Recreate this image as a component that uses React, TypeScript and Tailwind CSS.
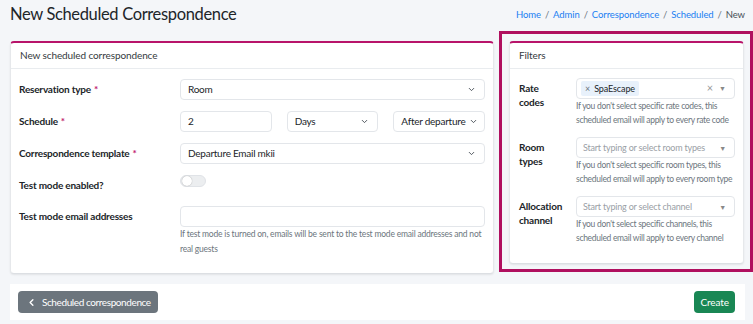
import { ChevronDown, ChevronLeft } from 'lucide-react';

function SelectBox({ value, className = '' }: { value: string; className?: string }) {
  return (
    <div
      className={`flex h-[21px] items-center justify-between rounded-[4px] border border-[#e3e6ea] bg-white pl-[7px] pr-[8px] text-[10px] tracking-[-0.25px] text-[#212529] ${className}`}
    >
      <span className="whitespace-nowrap">{value}</span>
      <ChevronDown size={9} strokeWidth={2.5} className="ml-[4px] shrink-0 text-[#495057]" />
    </div>
  );
}

function TextBox({ value, className = '' }: { value?: string; className?: string }) {
  return (
    <div
      className={`flex h-[21px] items-center rounded-[4px] border border-[#e3e6ea] bg-white px-[7px] text-[10px] text-[#212529] ${className}`}
    >
      {value}
    </div>
  );
}

function Req() {
  return <span className="ml-[3px] text-[#c0186e]">*</span>;
}

function Caret() {
  return <span className="ml-[6px] text-[7px] text-[#888]">▼</span>;
}

function Help({ children }: { children: React.ReactNode }) {
  return <p className="text-[8.5px] leading-[14px] tracking-[-0.3px] text-[#6c757d]">{children}</p>;
}

function FilterRow({
  label,
  children,
  help,
  last,
}: {
  label: string[];
  children: React.ReactNode;
  help: string;
  last?: boolean;
}) {
  return (
    <div className={`flex ${last ? '' : 'mb-[10px]'}`}>
      <div className="w-[57px] pt-[3px] text-[10px] font-bold leading-[14px] tracking-[-0.2px] text-[#212529]">
        {label.map((l) => (
          <div key={l}>{l}</div>
        ))}
      </div>
      <div className="flex-1">
        {children}
        <Help>{help}</Help>
      </div>
    </div>
  );
}

const labelCls = 'w-[161px] text-[10px] font-bold tracking-[-0.2px] text-[#212529]';

export default function App() {
  return (
    <div
      className="min-h-[324px] bg-[#f4f6f9] pr-[8px] pl-[10px]"
      style={{ fontFamily: 'Lato, "Liberation Sans", sans-serif' }}
    >
      <div className="flex h-[31px] items-center justify-between">
        <h1 className="pb-[2px] text-[16.5px] tracking-[-0.35px] text-[#212529]">New Scheduled Correspondence</h1>
        <nav className="flex items-center gap-[4px] text-[9.5px] tracking-[-0.1px] text-[#6c757d]">
          <span className="text-[#1a7ef2]">Home</span>
          <span>/</span>
          <span className="text-[#1a7ef2]">Admin</span>
          <span>/</span>
          <span className="text-[#1a7ef2]">Correspondence</span>
          <span>/</span>
          <span className="text-[#1a7ef2]">Scheduled</span>
          <span>/</span>
          <span className="text-[#495057]">New</span>
        </nav>
      </div>

      <div className="-mr-[8px] flex items-start gap-[5px]">
        <section className="mt-[10px] h-[233px] w-[484px] rounded-[4px] border-x border-b border-t-2 border-x-[#e6e8eb] border-b-[#dcdfe3] border-t-[#b8146a] bg-white shadow-[0_1px_2px_rgba(0,0,0,0.08)]">
          <div className="flex h-[26px] items-center border-b border-[#e9ecef] px-[9px] text-[10px] tracking-[-0.1px] text-[#343a40]">
            New scheduled correspondence
          </div>
          <div className="px-[8px] pt-[10px]">
            <div className="mb-[11px] flex items-center">
              <div className={labelCls}>
                Reservation type<Req />
              </div>
              <SelectBox value="Room" className="flex-1" />
            </div>
            <div className="mb-[11px] flex items-center">
              <div className={labelCls}>
                Schedule<Req />
              </div>
              <div className="grid flex-1 grid-cols-3 gap-[15px]">
                <TextBox value="2" />
                <SelectBox value="Days" />
                <SelectBox value="After departure" />
              </div>
            </div>
            <div className="mb-[11px] flex items-center">
              <div className={labelCls}>
                Correspondence template<Req />
              </div>
              <SelectBox value="Departure Email mkii" className="flex-1" />
            </div>
            <div className="mb-[10px] flex h-[21px]">
              <div className={`${labelCls} pt-[4px] leading-[13px]`}>Test mode enabled?</div>
              <div className="flex h-[12px] w-[26px] items-center rounded-full border border-[#e0e3e7] bg-[#eceef0] px-[1px]">
                <div className="h-[10px] w-[10px] rounded-full bg-white shadow-[0_0_1px_rgba(0,0,0,0.4)]" />
              </div>
            </div>
            <div className="flex">
              <div className={`${labelCls} flex h-[21px] items-center`}>Test mode email addresses</div>
              <div className="flex-1">
                <TextBox />
                <p className="text-[8.5px] leading-[15px] tracking-[-0.2px] text-[#6c757d]">
                  If test mode is turned on, emails will be sent to the test mode email addresses and not real guests
                </p>
              </div>
            </div>
          </div>
        </section>

        <div className="h-[241px] flex-1 border-[3px] border-[#b0105f] pt-[7px] pr-[6px] pl-[7px]">
          <section className="h-[223px] rounded-[4px] border-x border-b border-t-2 border-x-[#e6e8eb] border-b-[#dcdfe3] border-t-[#b8146a] bg-white shadow-[0_1px_2px_rgba(0,0,0,0.08)]">
            <div className="flex h-[26px] items-center border-b border-[#e9ecef] px-[9px] text-[10px] tracking-[-0.1px] text-[#343a40]">
              Filters
            </div>
            <div className="pt-[9px] pr-[8px] pl-[9px]">
              <FilterRow
                label={['Rate', 'codes']}
                help="If you don't select specific rate codes, this scheduled email will apply to every rate code"
              >
                <div className="flex h-[21px] items-center rounded-[4px] border border-[#e3e6ea] bg-white pr-[8px] pl-[4px]">
                  <span className="flex h-[15px] items-center gap-[4px] rounded-[2px] bg-[#e8f1fb] px-[4px] text-[9px] tracking-[-0.1px] text-[#212529]">
                    <span className="text-[#6c757d]">×</span>
                    SpaEscape
                  </span>
                  <span className="ml-auto text-[11px] text-[#999]">×</span>
                  <Caret />
                </div>
              </FilterRow>
              <FilterRow
                label={['Room', 'types']}
                help="If you don't select specific room types, this scheduled email will apply to every room type"
              >
                <div className="flex h-[21px] items-center rounded-[4px] border border-[#e3e6ea] bg-white pr-[8px] pl-[6px] text-[9px] tracking-[-0.2px] text-[#9aa0a6]">
                  Start typing or select room types
                  <span className="ml-auto">
                    <Caret />
                  </span>
                </div>
              </FilterRow>
              <FilterRow
                last
                label={['Allocation', 'channel']}
                help="If you don't select specific channels, this scheduled email will apply to every channel"
              >
                <div className="flex h-[21px] items-center rounded-[4px] border border-[#e3e6ea] bg-white pr-[8px] pl-[6px] text-[9px] tracking-[-0.2px] text-[#9aa0a6]">
                  Start typing or select channel
                  <span className="ml-auto">
                    <Caret />
                  </span>
                </div>
              </FilterRow>
            </div>
          </section>
        </div>
      </div>

      <div className="mt-[10px] flex h-[36px] items-center justify-between bg-white px-[8px]">
        <button className="flex h-[22px] items-center gap-[5px] rounded-[4px] bg-[#6c757d] pr-[7px] pl-[8px] text-[10px] tracking-[-0.4px] text-white">
          <ChevronLeft size={11} strokeWidth={3} />
          Scheduled correspondence
        </button>
        <button className="mr-[2px] h-[22px] rounded-[4px] bg-[#198754] px-[6px] text-[10px] tracking-[-0.1px] text-white">
          Create
        </button>
      </div>
    </div>
  );
}
